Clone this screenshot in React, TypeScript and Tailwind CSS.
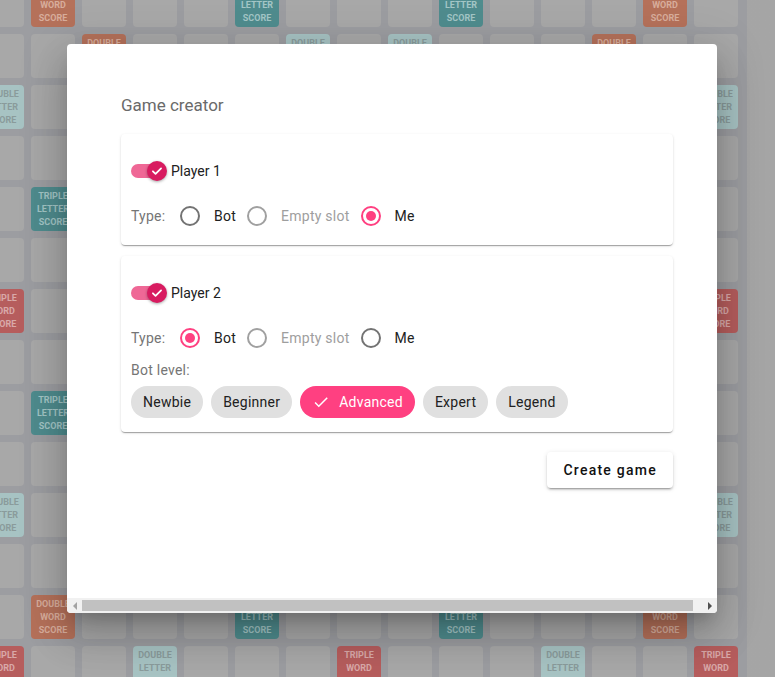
import React from "react";

type Kind = "TW" | "DW" | "TL" | "DL" | "N";

const TW = ["0,0", "0,7", "0,14", "7,0", "7,14", "14,0", "14,7", "14,14"];
const DW = ["1,1", "2,2", "3,3", "4,4", "1,13", "2,12", "3,11", "4,10", "13,1", "12,2", "11,3", "10,4", "13,13", "12,12", "11,11", "10,10"];
const TL = ["1,5", "1,9", "5,1", "5,5", "5,9", "5,13", "9,1", "9,5", "9,9", "9,13", "13,5", "13,9"];
const DL = ["0,3", "0,11", "2,6", "2,8", "3,0", "3,7", "3,14", "6,2", "6,6", "6,8", "6,12", "7,3", "7,11", "8,2", "8,6", "8,8", "8,12", "11,0", "11,7", "11,14", "12,6", "12,8", "14,3", "14,11"];

function kindOf(r: number, c: number): Kind {
  const k = `${r},${c}`;
  if (TW.includes(k)) return "TW";
  if (DW.includes(k)) return "DW";
  if (TL.includes(k)) return "TL";
  if (DL.includes(k)) return "DL";
  return "N";
}

const LABELS: Record<Kind, string[]> = {
  TW: ["TRIPLE", "WORD", "SCORE"],
  DW: ["DOUBLE", "WORD", "SCORE"],
  TL: ["TRIPLE", "LETTER", "SCORE"],
  DL: ["DOUBLE", "LETTER", "SCORE"],
  N: [],
};

const CELL_CLASS: Record<Kind, string> = {
  TW: "bg-[#b65d5d] text-[#d9a9a9]",
  DW: "bg-[#b5715a] text-[#d8ad9c]",
  TL: "bg-[#4f8c8e] text-[#a3c6c6]",
  DL: "bg-[#a7c3c3] text-[#8a9b9b]",
  N: "bg-[#a8a8a8]",
};

function Board() {
  const cells = [];
  for (let r = 0; r < 15; r++) {
    for (let c = 0; c < 15; c++) {
      const k = kindOf(r, c);
      cells.push(
        <div
          key={`${r}-${c}`}
          className={`w-[44px] h-[44px] rounded-[4px] flex flex-col items-center justify-center text-[9px] font-bold leading-[13px] ${CELL_CLASS[k]}`}
        >
          {LABELS[k].map((l) => (
            <span key={l}>{l}</span>
          ))}
        </div>
      );
    }
  }
  return (
    <div className="-ml-[29px] -mt-[77px] p-[9px] bg-[#9c9da1] grid grid-cols-[repeat(15,44px)] gap-[7px] shrink-0">
      {cells}
    </div>
  );
}

function Toggle() {
  return (
    <div className="relative w-[36px] h-[20px] shrink-0">
      <div className="absolute left-0 top-[3px] w-[34px] h-[14px] rounded-full bg-[#ef6896]" />
      <div className="absolute right-0 top-0 w-[20px] h-[20px] rounded-full bg-[#d81b60] shadow-[0_1px_3px_rgba(0,0,0,0.35)] flex items-center justify-center">
        <svg width="14" height="14" viewBox="0 0 24 24">
          <path d="M5 12.5l4.5 4.5L19 7.5" fill="none" stroke="white" strokeWidth="3" strokeLinecap="round" strokeLinejoin="round" />
        </svg>
      </div>
    </div>
  );
}

type RadioState = "off" | "disabled" | "on";

function Radio({ state, label }: { state: RadioState; label: string }) {
  const border =
    state === "on" ? "border-[#ff4081]" : state === "disabled" ? "border-[#a0a0a0]" : "border-[#737373]";
  const text = state === "disabled" ? "text-[#9e9e9e]" : "text-[#212121]";
  return (
    <div className="flex items-center">
      <div className={`w-[20px] h-[20px] rounded-full border-2 ${border} flex items-center justify-center shrink-0`}>
        {state === "on" && <div className="w-[10px] h-[10px] rounded-full bg-[#ff4081]" />}
      </div>
      <span className={`ml-[14px] text-[14px] tracking-[0.25px] ${text}`}>{label}</span>
    </div>
  );
}

function TypeRow({ states }: { states: RadioState[] }) {
  const labels = ["Bot", "Empty slot", "Me"];
  return (
    <div className="h-[40px] flex items-center">
      <span className="w-[49px] text-[14px] tracking-[0.25px] text-[#757575]">Type:</span>
      <div className="flex items-center gap-[11px]">
        {labels.map((l, i) => (
          <Radio key={l} state={states[i]} label={l} />
        ))}
      </div>
    </div>
  );
}

function Chip({ label, selected }: { label: string; selected?: boolean }) {
  if (selected) {
    return (
      <div className="h-[32px] rounded-full bg-[#ff4081] text-white text-[14px] tracking-[0.25px] flex items-center pl-[12px] pr-[12px]">
        <svg width="18" height="18" viewBox="0 0 24 24" className="mr-[9px]">
          <path d="M9 16.17L4.83 12l-1.42 1.41L9 19 21 7l-1.41-1.41z" fill="white" />
        </svg>
        {label}
      </div>
    );
  }
  return (
    <div className="h-[32px] rounded-full bg-[#e0e0e0] text-[#212121] text-[14px] tracking-[0.25px] flex items-center px-[12px]">
      {label}
    </div>
  );
}

const cardShadow =
  "shadow-[0_2px_1px_-1px_rgba(0,0,0,0.2),0_1px_1px_0_rgba(0,0,0,0.14),0_1px_3px_0_rgba(0,0,0,0.12)]";

function Modal() {
  return (
    <div className="w-[650px] h-[569px] bg-white rounded-[4px] overflow-hidden flex flex-col shadow-[0_11px_15px_-7px_rgba(0,0,0,0.2),0_24px_38px_3px_rgba(0,0,0,0.14),0_9px_46px_8px_rgba(0,0,0,0.12)]">
      <div className="flex-1 pl-[54px] pt-[49px]">
        <div className="w-[552px]">
          <div className="text-[17px] leading-[24px] text-[#6a6a6a]">Game creator</div>
          <div className={`mt-[17px] bg-white rounded-[4px] ${cardShadow} px-[10px] pt-[24px] pb-[9px]`}>
            <div className="h-[26px] flex items-center">
              <Toggle />
              <span className="ml-[4px] text-[14px] text-[#212121]">Player 1</span>
            </div>
            <div className="mt-[12px]">
              <TypeRow states={["off", "disabled", "on"]} />
            </div>
          </div>
          <div className={`mt-[11px] bg-white rounded-[4px] ${cardShadow} px-[10px] pt-[24px] pb-[14px]`}>
            <div className="h-[26px] flex items-center">
              <Toggle />
              <span className="ml-[4px] text-[14px] text-[#212121]">Player 2</span>
            </div>
            <div className="mt-[12px]">
              <TypeRow states={["on", "disabled", "off"]} />
            </div>
            <div className="mt-[2px] h-[20px] flex items-center text-[14px] tracking-[0.25px] text-[#757575]">Bot level:</div>
            <div className="mt-[6px] flex items-center gap-[8px]">
              <Chip label="Newbie" />
              <Chip label="Beginner" />
              <Chip label="Advanced" selected />
              <Chip label="Expert" />
              <Chip label="Legend" />
            </div>
          </div>
          <div className="mt-[20px] flex justify-end">
            <div className="h-[36px] px-[16px] rounded-[4px] bg-white flex items-center text-[14px] font-medium tracking-[1.25px] text-[#111111] shadow-[0_3px_1px_-2px_rgba(0,0,0,0.2),0_2px_2px_0_rgba(0,0,0,0.14),0_1px_5px_0_rgba(0,0,0,0.12)]">
              Create game
            </div>
          </div>
        </div>
      </div>
      <div className="h-[15px] bg-[#f1f1f1] flex items-center shrink-0">
        <div className="w-[15px] h-[15px] flex items-center justify-center">
          <div className="w-0 h-0 border-y-[4px] border-y-transparent border-r-[4px] border-r-[#a3a3a3]" />
        </div>
        <div className="w-[611px] h-[11px] bg-[#c1c1c1]" />
        <div className="flex-1" />
        <div className="w-[15px] h-[15px] flex items-center justify-center">
          <div className="w-0 h-0 border-y-[4px] border-y-transparent border-l-[4px] border-l-[#505050]" />
        </div>
      </div>
    </div>
  );
}

export default function App() {
  return (
    <div
      className="relative w-[775px] h-[677px] overflow-hidden bg-[linear-gradient(90deg,#9f9fa1,#a7a7a7_40%,#a5a5a5)]"
      style={{ fontFamily: "Roboto, 'Noto Sans', sans-serif" }}
    >
      <div className="flex">
        <Board />
      </div>
      <div className="absolute inset-0 pl-[67px] pt-[44px]">
        <Modal />
      </div>
    </div>
  );
}
